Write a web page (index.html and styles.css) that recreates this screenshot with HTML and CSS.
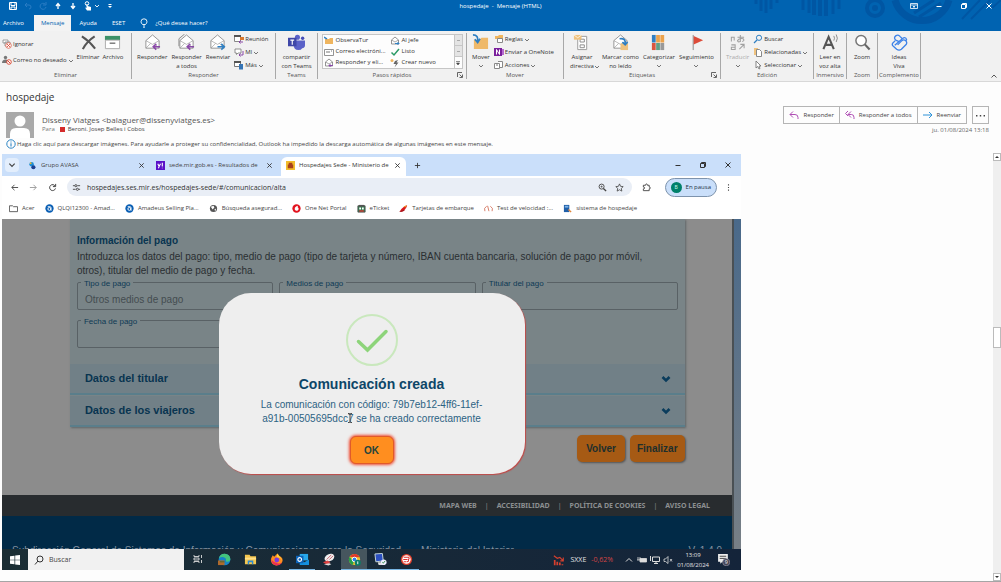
FILE: index.html
```html
<!DOCTYPE html>
<html lang="es">
<head>
<meta charset="utf-8">
<title>hospedaje - Mensaje (HTML)</title>
<link rel="stylesheet" href="styles.css">
</head>
<body>
<svg class="defs" aria-hidden="true">
  <symbol id="chev" viewBox="0 0 6 6"><path d="M1 2l2 2 2-2" fill="none" stroke="currentColor" stroke-width=".9"/></symbol>
  <symbol id="env" viewBox="0 0 18 18"><path d="M2 7l7-6 7 6v8H2z" fill="#fff" stroke="#888" stroke-width=".9"/><path d="M2 7l7 4 7-4M2 15l5-5M16 15l-5-5" fill="none" stroke="#999" stroke-width=".7"/></symbol>
  <symbol id="x" viewBox="0 0 8 8"><path d="M1.500 1.500l5 5m0-5l-5 5" fill="none" stroke="currentColor"/></symbol>
  <symbol id="restore" viewBox="0 0 8 8"><path d="M1.500 2.500h4v4h-4zM2.500 2V1.500h4v4H6" fill="none" stroke="currentColor"/></symbol>
  <symbol id="launch" viewBox="0 0 6 6"><path d="M.5 5V.5H5M2.500 2.500L5 5M5.500 2.500v3h-3" fill="none" stroke="#555" stroke-width=".9"/></symbol>
  <symbol id="amadeus" viewBox="0 0 10 10"><circle cx="5" cy="5" r="4.600" fill="#0a5fb4"/><circle cx="4.800" cy="5.500" r="1.600" fill="none" stroke="#fff"/><path d="M3 3h2.500q1.200 0 1.200 1.200V7.500" fill="none" stroke="#fff"/></symbol>
</svg>

<header class="titlebar">
  <svg class="art" viewBox="0 0 250 31" aria-hidden="true">
    <g stroke="#0056a3" stroke-width="3" fill="none"><path d="M5 0v4M10 0v11M15 0v13M20 0v9M26 0v3M52 0v10M58 0v13"/><path d="M63 0v15M69 0v16M75 0v16" stroke-width="4"/><path d="M82 0v14M88 0v9"/><circle cx="124" cy="8" r="8" stroke-width="4"/><path d="M144 0a28 28 0 0 0 54 0" stroke-width="7"/><path d="M163 13L183 0M168 17l22-14" /><path d="M211 19L229 0M220 19L239 0M241 8l9-8" stroke-width="2"/></g><circle cx="124" cy="8" r="3" fill="#0056a3"/>
  </svg>
  <div class="title-row">
    <div class="quick">
      <button aria-label="Guardar"><svg viewBox="0 0 10 10"><path d="M1.500 1.500h7v7h-7zM3 1.500v3h4v-3M3 8.500V6h4v2.500" fill="none" stroke="#fff"/></svg></button>
      <button aria-label="Deshacer"><svg viewBox="0 0 10 10"><path d="M4 2L2 4l2 2M2 4h4q2 0 2 2T6 8" fill="none" stroke="#2a7dc4"/></svg></button>
      <button aria-label="Rehacer"><svg viewBox="0 0 10 10"><path d="M7 3a3 3 0 1 0 1 3M8 1v3H5" fill="none" stroke="#2a7dc4"/></svg></button>
      <button aria-label="Anterior"><svg viewBox="0 0 10 10"><path d="M5 8V3M3 5l2-2.500L7 5" fill="none" stroke="#fff" stroke-width="1.300"/></svg></button>
      <button aria-label="Siguiente"><svg viewBox="0 0 10 10"><path d="M5 2v5M3 5l2 2.500L7 5" fill="none" stroke="#fff" stroke-width="1.300"/></svg></button>
      <button aria-label="Modo táctil"><svg viewBox="0 0 10 10"><circle cx="4" cy="2.500" r="1.800" fill="none" stroke="#fff"/><path d="M3.500 3v4L2 6.500 4 9.500h4V6L4.500 5V3z" fill="#fff"/></svg></button>
      <button class="mini" aria-label="Opciones"><svg viewBox="0 0 6 6"><use href="#chev"/></svg></button>
      <button class="mini last" aria-label="Personalizar"><svg viewBox="0 0 6 6"><path d="M1.500 1.500h3" stroke="#fff"/><path d="M1 3h4L3 5z" fill="#fff"/></svg></button>
    </div>
    <span>hospedaje&nbsp; -&nbsp; Mensaje (HTML)</span>
    <div class="win">
      <button aria-label="Cinta"><svg viewBox="0 0 8 8"><path d="M.5 1.500h7v5h-7zM.5 3h7M4 6V4M3 5l1-1 1 1" fill="none" stroke="#fff" stroke-width=".8"/></svg></button>
      <button aria-label="Minimizar"><svg viewBox="0 0 8 8"><path d="M1.500 4.500h5" stroke="#fff"/></svg></button>
      <button aria-label="Restaurar"><svg viewBox="0 0 8 8"><use href="#restore"/></svg></button>
      <button aria-label="Cerrar"><svg viewBox="0 0 8 8"><use href="#x"/></svg></button>
    </div>
  </div>
  <nav class="tabs">
    <button>Archivo</button><button class="on">Mensaje</button><button>Ayuda</button><button>ESET</button>
    <label class="tell"><svg viewBox="0 0 8 10"><path d="M2.500 6.500Q1 5 1 3.800a3 3 0 0 1 6 0Q7 5 5.500 6.500zM3 8h2M3.300 9.400h1.400" fill="none" stroke="#fff" stroke-width=".9"/></svg><input type="text" placeholder="¿Qué desea hacer?" aria-label="¿Qué desea hacer?"></label>
  </nav>
</header>

<section class="ribbon" aria-label="Cinta de opciones">
  <div class="group">
    <div class="tools tight">
      <div class="list two">
        <button><svg viewBox="0 0 10 10"><path d="M1 1h5v3H1zM3 3h5v4H3z" fill="#fff" stroke="#888" stroke-width=".8"/><circle cx="6.500" cy="6.500" r="2.800" fill="#fff" stroke="#dd6a58" stroke-width=".9"/><path d="M5.200 5.200l2.600 2.600M7.800 5.200L5.200 7.800" stroke="#d9442f"/></svg>Ignorar</button>
        <button><svg viewBox="0 0 10 10"><circle cx="3.500" cy="2.500" r="1.700" fill="#777"/><path d="M0 8q0-3.500 3.500-3.500T7 8z" fill="#777"/><circle cx="7" cy="7" r="2.300" fill="#fff" stroke="#d9442f" stroke-width=".9"/><path d="M5.500 5.500l3 3" stroke="#d9442f"/></svg>Correo no deseado<svg class="cv"><use href="#chev"/></svg></button>
      </div>
      <button class="big"><svg viewBox="0 0 18 18"><path d="M2 2.500q8 5 14 13M15.500 2.500Q7 8 3 16" fill="none" stroke="#555" stroke-width="2.200"/></svg>Eliminar</button>
      <button class="big"><svg viewBox="0 0 18 18"><path d="M1 2h16v4.500H1z" fill="#3c9168"/><path d="M1.500 6.500h15v9h-15z" fill="#fff" stroke="#aaa"/><path d="M6 9h6v1.500H6z" fill="#777"/></svg>Archivo</button>
    </div>
    <footer>Eliminar</footer>
  </div>
  <div class="group">
    <div class="tools wide">
      <button class="big"><svg viewBox="0 0 18 18"><use href="#env"/><path d="M17 13.500h-7m3-3l-3.200 3 3.200 3" fill="none" stroke="#8a4aa8" stroke-width="1.700"/></svg>Responder</button>
      <button class="big"><svg viewBox="0 0 18 18"><path d="M1 13V5l6-5" fill="none" stroke="#888"/><use href="#env"/><path d="M17 13.500h-7m3-3l-3.200 3 3.200 3" fill="none" stroke="#8a4aa8" stroke-width="1.700"/></svg>Responder<br>a todos</button>
      <button class="big"><svg viewBox="0 0 18 18"><use href="#env"/><path d="M9 13.500h7m-3-3l3.200 3-3.200 3" fill="none" stroke="#2f7fc2" stroke-width="1.700"/></svg>Reenviar</button>
      <div class="list">
        <button><svg viewBox="0 0 10 10"><path d="M.5 1.500h6v6h-6z" fill="#fff" stroke="#888"/><path d="M0 1h7v2H0z" fill="#555"/><path d="M6 3h4v3H6z" fill="#d9792f"/><path d="M9 8H5m1.500-1.500L5 8l1.500 1.500" stroke="#8a4aa8" fill="none"/></svg>Reunión</button>
        <button><svg viewBox="0 0 10 10"><path d="M1 2h6v4H4L2.500 7.500V6H1z" fill="#fff" stroke="#777" stroke-width=".8"/><path d="M9 4v4H5m1.500-1.500L5 8l1.500 1.500" stroke="#8a4aa8" fill="none"/></svg>MI<svg class="cv"><use href="#chev"/></svg></button>
        <button><svg viewBox="0 0 10 10"><path d="M.5 1.500h6v5h-6z" fill="#fff" stroke="#777"/><path d="M0 1h7v2H0z" fill="#555"/><path d="M5 4h4v5.500H5z" fill="#3574b5"/></svg>Más<svg class="cv"><use href="#chev"/></svg></button>
      </div>
    </div>
    <footer>Responder</footer>
  </div>
  <div class="group">
    <div class="tools mid">
      <button class="big"><svg viewBox="0 0 18 18"><circle cx="10" cy="3.500" r="2.700" fill="#5b62c8"/><circle cx="15.500" cy="4.500" r="1.800" fill="#464eb8"/><path d="M6 7h12v5q0 3-3 3-1 2-4 2-5 0-5-5z" fill="#5b62c8"/><path d="M0 4h9v9H0z" fill="#3f47a8"/><path d="M2.500 6.500h4M4.500 6.500v5" stroke="#fff" stroke-width="1.200"/></svg>compartir<br>con Teams</button>
    </div>
    <footer>Teams</footer>
  </div>
  <div class="group">
    <div class="tools mid">
      <div class="gallery">
        <button><svg viewBox="0 0 10 10"><path d="M1 3h4l1-1h3v6H1z" fill="#efb55f"/><path d="M0 1l3 2" stroke="#2f7fc2" stroke-width="1.500"/></svg>ObservaTur</button>
        <button><svg viewBox="0 0 10 10"><path d="M1.500 4L5 1l3.500 3v4h-7z" fill="#fff" stroke="#888" stroke-width=".9"/><path d="M1.500 4L5 6l3.500-2" fill="none" stroke="#888" stroke-width=".7"/><path d="M5 7.500h4M7.500 6L9 7.500 7.500 9" stroke="#2f7fc2" fill="none"/></svg>Al jefe</button>
        <button><svg viewBox="0 0 10 10"><path d="M.5 2.500h9v6h-9z" fill="#fff" stroke="#888" stroke-width=".9"/><path d="M2 5h4M7 4h1" stroke="#777"/></svg>Correo electróni...</button>
        <button><svg viewBox="0 0 10 10"><path d="M1.500 5.500L4 8l5-6" fill="none" stroke="#2b9a66" stroke-width="1.500"/></svg>Listo</button>
        <button><svg viewBox="0 0 10 10"><path d="M1.500 4L5 1l3.500 3v4h-7z" fill="#fff" stroke="#888" stroke-width=".9"/><path d="M1.500 4L5 6l3.500-2" fill="none" stroke="#888" stroke-width=".7"/><path d="M9 7.500H5M6.500 6L5 7.500 6.500 9" stroke="#8a4aa8" fill="none"/></svg>Responder y eli...</button>
        <button><svg viewBox="0 0 10 10"><path d="M5 3L3.500 6H6L4.500 9.500 8.500 4.500H6.500L8 2z" fill="#666"/><circle cx="2" cy="2.500" r="1.500" fill="#efb55f"/></svg>Crear nuevo</button>
        <div class="spin"><button aria-label="Subir"><i></i></button><button aria-label="Bajar"><i></i></button><button aria-label="Más pasos"><svg viewBox="0 0 6 6"><path d="M1 1.500h4M1.500 3h3L3 5z" stroke="#444" stroke-width=".6" fill="#444"/></svg></button></div>
      </div>
    </div>
    <footer>Pasos rápidos<svg class="launch"><use href="#launch"/></svg></footer>
  </div>
  <div class="group">
    <div class="tools wide">
      <button class="big"><svg viewBox="0 0 18 18"><path d="M2 6h6l2-2h7v12H2z" fill="#efb96a"/><path d="M1 1q6 0 5 7M3 5.500L6 9l2.500-4" fill="none" stroke="#2f7fc2" stroke-width="1.800"/></svg>Mover<svg class="cv"><use href="#chev"/></svg></button>
      <div class="list">
        <button><svg viewBox="0 0 10 10"><path d="M1 2h3l1-1h4v4H1z" fill="#efb55f"/><path d="M3.500 4.500h5v4h-5z" fill="#fff" stroke="#888"/></svg>Reglas<svg class="cv"><use href="#chev"/></svg></button>
        <button><svg viewBox="0 0 10 10"><path d="M0 1h8v8H0z" fill="#7a1f9c"/><path d="M8 2h2v6H8z" fill="#b56ad0"/><path d="M2.500 7.500v-5l3 5v-5" stroke="#fff" fill="none"/></svg>Enviar a OneNote</button>
        <button><svg viewBox="0 0 10 10"><path d="M.5 3.500h5v5h-5zM4 1.500h4.500v6H6" fill="#fff" stroke="#888"/><path d="M2 5h2" stroke="#777"/></svg>Acciones<svg class="cv"><use href="#chev"/></svg></button>
      </div>
    </div>
    <footer>Mover</footer>
  </div>
  <div class="group">
    <div class="tools wide mid">
      <button class="big assign"><svg viewBox="0 0 18 18"><path d="M5 2.500h9.500v14H5z" fill="#fff" stroke="#999"/><path d="M7.500 5.500h4.500v3H7.500zM7.500 11.500h4.500v3H7.500z" fill="none" stroke="#888"/><path d="M1 1h8v5H1z" fill="#efc27e"/><path d="M1 1l4 3 4-3" fill="none" stroke="#fff" stroke-width=".8"/></svg>Asignar<br>directiva<svg class="cv in"><use href="#chev"/></svg></button>
      <button class="big"><svg viewBox="0 0 18 18"><use href="#env"/><path d="M9 10h8v7H9z" fill="#efc27e"/><path d="M8 5q7-1 6 6M11 8.500l3 3 2.500-3" fill="none" stroke="#2f7fc2" stroke-width="1.800"/></svg>Marcar como<br>no leído</button>
      <button class="big"><svg viewBox="0 0 18 18"><path d="M2 1h4v8H2z" fill="#2f7fc2"/><path d="M6.500 1h4v8h-4zM11 1h4v8h-4z" fill="#eba24c"/><path d="M2 9.500h4V17H2z" fill="#d9553f"/><path d="M6.500 9.500h4V17h-4z" fill="#5f9f86"/><path d="M11 9.500h4V17h-4z" fill="#999"/></svg>Categorizar<svg class="cv"><use href="#chev"/></svg></button>
      <button class="big"><svg viewBox="0 0 18 18"><path d="M5.500 1v16" stroke="#888"/><path d="M6 2l10 4.500L6 11z" fill="#dd4b39"/></svg>Seguimiento<svg class="cv"><use href="#chev"/></svg></button>
    </div>
    <footer>Etiquetas<svg class="launch"><use href="#launch"/></svg></footer>
  </div>
  <div class="group">
    <div class="tools wide">
      <button class="big off"><svg viewBox="0 0 18 18"><path d="M2.500 3v5M2 3.500h4M5.500 3v4M9 3.500h7M12 1v7q-3 1-3-1 2-3 6-2 2 2-1 3M2.500 11.500h4v5h-4v-2.500h4M11 16l5-5M12 11h4v4" fill="none" stroke="#a0a0a0" stroke-width="1.100"/></svg>Traducir<svg class="cv"><use href="#chev"/></svg></button>
      <div class="list">
        <button><svg viewBox="0 0 10 10"><circle cx="6" cy="3.800" r="2.600" fill="none" stroke="#2f7fc2"/><path d="M4 6L1 9" stroke="#2f7fc2" stroke-width="1.300"/></svg>Buscar</button>
        <button><svg viewBox="0 0 10 10"><path d="M1 1h4v7H1z" fill="#efc27e"/><path d="M3.500 2.500h3l2 2v5h-5z" fill="#fff" stroke="#888"/></svg>Relacionadas<svg class="cv"><use href="#chev"/></svg></button>
        <button><svg viewBox="0 0 10 10"><path d="M3 1v7l1.700-1.500L6 9l1-.5L6 6h2z" fill="#fff" stroke="#777" stroke-width=".9"/></svg>Seleccionar<svg class="cv"><use href="#chev"/></svg></button>
      </div>
    </div>
    <footer>Edición</footer>
  </div>
  <div class="group">
    <div class="tools mid"><button class="big"><svg viewBox="0 0 18 18"><path d="M1.500 16L7 3l5.500 13M3.500 11.500h7" fill="none" stroke="#555" stroke-width="2.200"/><path d="M12.500 2q1.500 2.500 0 5M15 .5q2.500 4 0 8" fill="none" stroke="#888"/></svg>Leer en<br>voz alta</button></div>
    <footer>Inmersivo</footer>
  </div>
  <div class="group">
    <div class="tools mid"><button class="big"><svg viewBox="0 0 18 18"><circle cx="7.500" cy="7" r="5.500" fill="#fff" stroke="#777" stroke-width="1.600"/><path d="M11.500 11l5 5.500" stroke="#666" stroke-width="2.300"/></svg>Zoom</button></div>
    <footer>Zoom</footer>
  </div>
  <div class="group">
    <div class="tools mid"><button class="big"><svg viewBox="0 0 18 18"><g fill="none" stroke="#3c82e8" stroke-width="1.400" stroke-linejoin="round"><path d="M8.500 8L5 6.500Q2.500 4 5 2q2.500-2 4.500.5L12 5 4 12"/><path d="M4.500 7L2 9.500Q.5 11.500 2.500 13L6 16.200q2.500 1.600 5 0l5-5Q17.500 9 15.500 7q-2-1.500-4 0L7 11.500"/><path d="M12 5l1.500-1q2.500-.5 3 2l-1 1.500"/></g></svg>Ideas<br>Viva</button></div>
    <footer>Complemento</footer>
  </div>
  <div class="group last"><button class="fold" aria-label="Contraer la cinta"><svg viewBox="0 0 8 6"><path d="M1.500 4.500L4 2l2.500 2.500" fill="none" stroke="#555"/></svg></button></div>
</section>

<section class="message">
  <h1>hospedaje</h1>
  <div class="meta">
    <svg class="avatar" viewBox="0 0 28 26"><path d="M0 0h28v26H0z" fill="#a9a9a9"/><circle cx="14" cy="9" r="5.500" fill="#fff"/><path d="M4 26v-4q0-6 6-6h8q6 0 6 6v4z" fill="#fff"/></svg>
    <div class="who">
      <div class="from">Disseny Viatges &lt;balaguer@dissenyviatges.es&gt;</div>
      <div class="to"><span>Para</span><i></i><b>Beroni. Josep Belles i Cobos</b></div>
    </div>
    <div class="actions">
      <div class="acts">
        <div class="trio">
          <button><svg viewBox="0 0 10 10"><path d="M4 1.500l-3 3 3 3M1 4.500h5q3 0 3 3V9" fill="none" stroke="#b04fb5"/></svg>Responder</button>
          <button><svg viewBox="0 0 10 10"><path d="M3 1L.5 3.500 3 6M6 1.500l-3 3 3 3M3 4.500h3.500q2.500 0 2.500 3V9" fill="none" stroke="#b04fb5"/></svg>Responder a todos</button>
          <button><svg viewBox="0 0 10 10"><path d="M0 5h9M6 2l3 3-3 3" fill="none" stroke="#2e93d8"/></svg>Reenviar</button>
        </div>
        <button class="more" aria-label="Más acciones"><svg viewBox="0 0 10 10"><path d="M0 4.400h1.600V6H0zM4.200 4.400h1.600V6H4.200zM8.400 4.400H10V6H8.400z" fill="#444"/></svg></button>
      </div>
      <time>ju. 01/08/2024 13:18</time>
    </div>
  </div>
  <button class="info"><svg viewBox="0 0 10 10"><circle cx="5" cy="5" r="4.200" fill="none" stroke="#2f86c4"/><path d="M5 4.300v3.200M5 2.400v1" stroke="#2f86c4" stroke-width="1.100"/></svg>Haga clic aquí para descargar imágenes. Para ayudarle a proteger su confidencialidad, Outlook ha impedido la descarga automática de algunas imágenes en este mensaje.</button>
</section>

<main class="body">
  <article class="shot">
    <div class="btabs">
      <button class="drop" aria-label="Buscar pestañas"><svg viewBox="0 0 6 6"><use href="#chev"/></svg></button>
      <div class="btab"><svg viewBox="0 0 10 10"><circle cx="4" cy="3.500" r="2.500" fill="#1b8fd6"/><circle cx="6" cy="7" r="2.300" fill="#1d3f8f"/><circle cx="3" cy="2.500" r="1" fill="#f0b52c"/></svg><span>Grupo AVASA</span><svg class="x"><use href="#x"/></svg></div>
      <div class="btab sep"><svg viewBox="0 0 10 10"><path d="M0 0h10v10H0z" fill="#5a10c8"/><path d="M2 3l1.500 3L5 3M3.500 6L2.700 8M7 2v4M7 7.500V8" stroke="#fff" stroke-width="1.200" fill="none"/></svg><span>sede.mir.gob.es - Resultados de</span><svg class="x"><use href="#x"/></svg></div>
      <div class="btab on"><svg viewBox="0 0 10 10"><path d="M0 0h10v10H0z" fill="#f2bd2d"/><path d="M3 2h4v6H3zM2 4h1v4H2zM7 4h1v4H7z" fill="#a8421c"/></svg><span>Hospedajes Sede - Ministerio de</span><svg class="x"><use href="#x"/></svg></div>
      <button class="plus" aria-label="Nueva pestaña"><svg viewBox="0 0 8 8"><path d="M4 1v6M1 4h6" stroke="#333"/></svg></button>
      <div class="bwin"><button aria-label="Minimizar"><svg viewBox="0 0 8 8"><path d="M1.500 4.500h5" stroke="#333"/></svg></button><button aria-label="Restaurar"><svg viewBox="0 0 8 8"><use href="#restore"/></svg></button><button aria-label="Cerrar"><svg viewBox="0 0 8 8"><use href="#x"/></svg></button></div>
    </div>
    <div class="bar">
      <button aria-label="Atrás"><svg viewBox="0 0 10 10"><path d="M9 5H2M5 2L2 5l3 3" fill="none" stroke="#444"/></svg></button>
      <button aria-label="Adelante"><svg viewBox="0 0 10 10"><path d="M1 5h7M5 2l3 3-3 3" fill="none" stroke="#999"/></svg></button>
      <button aria-label="Recargar"><svg viewBox="0 0 10 10"><path d="M8 3.500A3.300 3.300 0 1 0 8.300 6M8.500 1v3h-3" fill="none" stroke="#444" stroke-width="1.100"/></svg></button>
      <div class="address">
        <svg viewBox="0 0 10 10"><path d="M1 3h2M6 3h3M1 7h3M7.500 7H9" stroke="#444"/><circle cx="4.300" cy="3" r="1.200" fill="none" stroke="#444"/><circle cx="6" cy="7" r="1.200" fill="none" stroke="#444"/></svg>
        <input type="text" aria-label="Dirección" value="hospedajes.ses.mir.es/hospedajes-sede/#/comunicacion/alta">
        <svg viewBox="0 0 10 10"><circle cx="4" cy="4" r="2.800" fill="none" stroke="#444"/><path d="M6 6l3 3" stroke="#444" stroke-width="1.500"/><path d="M2.800 4h2.400M4 2.800v2.400" stroke="#444" stroke-width=".7"/></svg>
        <svg viewBox="0 0 10 10"><path d="M5 1l1.200 2.700 2.900.3L7 6l.6 3L5 7.500 2.400 9 3 6 .9 4l2.900-.3z" fill="none" stroke="#444" stroke-width=".9"/></svg>
      </div>
      <button class="ext" aria-label="Extensiones"><svg viewBox="0 0 10 10"><path d="M1.500 2.500H4q0-1.500 1-1.500t1 1.500h2v2q1.300 0 1.300 1T8 6.500v2H1.500V6.500q1.500 0 1.500-1t-1.500-1z" fill="none" stroke="#444"/></svg></button>
      <button class="pause"><i>B</i>En pausa</button>
      <button aria-label="Menú"><svg viewBox="0 0 10 10"><path d="M4.400 1.500h1.200v1.200H4.400zM4.400 4.400h1.200v1.200H4.400zM4.400 7.300h1.200v1.200H4.400z" fill="#444"/></svg></button>
    </div>
    <nav class="marks">
      <a href="#"><svg viewBox="0 0 10 10"><path d="M.5 2h3.500l1 1h4.500v5.500h-9z" fill="none" stroke="#555"/></svg>Acer</a>
      <a href="#"><svg><use href="#amadeus"/></svg>QLQI12300 - Amad...</a>
      <a href="#"><svg><use href="#amadeus"/></svg>Amadeus Selling Pla...</a>
      <a href="#"><svg viewBox="0 0 10 10"><circle cx="5" cy="5" r="4" fill="#555"/><path d="M2 3l3-1 1 2-2 2zM6 6l2-1-1 3z" fill="#fff"/></svg>Búsqueda asegurad...</a>
      <a href="#"><svg viewBox="0 0 10 10"><circle cx="5" cy="5" r="4.600" fill="#e2121e"/><path d="M6.500 2Q3 3 3 5.500a2.200 2.200 0 1 0 3.300-2z" fill="#fff"/></svg>One Net Portal</a>
      <a href="#"><svg viewBox="0 0 10 10"><path d="M1 2h8v7H1z" fill="#2f7a4c" stroke="#555"/><path d="M2 1h6v2H2z" fill="#555"/><path d="M2.500 4h2v2h-2zM5.500 4h2v2h-2z" fill="#fff"/><path d="M2.500 7h5v1.500h-5z" fill="#d33"/></svg>eTicket</a>
      <a href="#"><svg viewBox="0 0 10 10"><path d="M1 8q3-5 8-6.500Q8 6 4 8z" fill="#d9161c"/><path d="M0 9q3-3 7-3-2 3-7 3z" fill="#a9161c"/><path d="M5 3l4-2-2 3z" fill="#f2a51d"/></svg>Tarjetas de embarque</a>
      <a href="#"><svg viewBox="0 0 10 10"><path d="M1 8a4.200 4.200 0 0 1 2-5.500M9 8a4.200 4.200 0 0 0-2-5.500M4 2l1.500 6" fill="none" stroke="#d8806a" stroke-width="1.100"/></svg>Test de velocidad :...</a>
      <a class="sys" href="#"><svg viewBox="0 0 10 10"><path d="M1 1h6v8H1z" fill="#1f5fa8"/><path d="M2 2h4v2H2z" fill="#7fb3e6"/><path d="M6 6l3 3" stroke="#e0873a" stroke-width="1.500"/></svg>sistema de hospedaje</a>
    </nav>
    <div class="page">
      <section class="panel">
        <div class="pay">
          <h2>Información del pago</h2>
          <p>Introduzca los datos del pago: tipo, medio de pago (tipo de tarjeta y número, IBAN cuenta bancaria, solución de pago por móvil, otros), titular del medio de pago y fecha.</p>
          <div class="fields">
            <div class="field"><label for="tipo">Tipo de pago</label><input id="tipo" type="text" value="Otros medios de pago"></div>
            <div class="field"><label for="medios">Medios de pago</label><input id="medios" type="text"></div>
            <div class="field"><label for="titular">Titular del pago</label><input id="titular" type="text"></div>
            <div class="field"><label for="fecha">Fecha de pago</label><input id="fecha" type="text"></div>
          </div>
        </div>
        <button class="acc">Datos del titular<svg viewBox="0 0 10 10"><path d="M1.500 3L5 6.500 8.500 3" fill="none" stroke="#0a3c5c" stroke-width="2.600"/></svg></button>
        <button class="acc">Datos de los viajeros<svg viewBox="0 0 10 10"><path d="M1.500 3L5 6.500 8.500 3" fill="none" stroke="#0a3c5c" stroke-width="2.600"/></svg></button>
      </section>
      <div class="cta"><button>Volver</button><button>Finalizar</button></div>
      <footer class="links"><a href="#">MAPA WEB</a><i>|</i><a href="#">ACCESIBILIDAD</a><i>|</i><a href="#">POLÍTICA DE COOKIES</a><i>|</i><a href="#">AVISO LEGAL</a></footer>
      <div class="org"><span>Subdirección General de Sistemas de Información y Comunicaciones para la Seguridad &nbsp; - &nbsp; Ministerio del Interior</span><span>V. 1.4.9</span></div>
      <div class="modal" role="dialog" aria-labelledby="done">
        <svg class="ok-ring" viewBox="0 0 52 52"><circle cx="26" cy="26" r="25" fill="none" stroke="#c9e8bd" stroke-width="2"/><path d="M12.500 27.500l9 8.500L40 17.500" fill="none" stroke="#8dd47a" stroke-width="3.500" stroke-linecap="round"/></svg>
        <h3 id="done">Comunicación creada</h3>
        <p>La comunicación con código: 79b7eb12-4ff6-11ef-<br>a91b-00505695dcc7 se ha creado correctamente</p>
        <button>OK</button>
        <svg class="caret" viewBox="0 0 6 10"><path d="M1 .5h1.500L3 1l.5-.5H5M3 1v8M1 9.500h1.500L3 9l.5.500H5" fill="none" stroke="#333" stroke-width=".9"/></svg>
      </div>
    </div>
    <div class="taskbar">
      <button class="start" aria-label="Inicio"><svg viewBox="0 0 10 10"><path d="M0 1.300L4.500.7v4H0zM5.200.6L10 0v4.700H5.200zM0 5.300h4.500v4L0 8.700zM5.200 5.300H10V10l-4.800-.6z" fill="#fff"/></svg></button>
      <label class="search"><svg viewBox="0 0 10 10"><circle cx="6" cy="4" r="3" fill="none" stroke="#333"/><path d="M4 6L1 9.500" stroke="#333"/></svg><input type="text" placeholder="Buscar" aria-label="Buscar"></label>
      <div class="apps">
        <button aria-label="Vista de tareas"><svg class="s" viewBox="0 0 10 10"><path d="M1 1v1.500h5V1M1 9V7.500h5V9M1 4h5v2H1zM8.500 1v3M8.500 6v3" fill="none" stroke="#ddd" stroke-width=".9"/></svg></button>
        <button aria-label="Edge"><svg viewBox="0 0 14 14"><circle cx="7" cy="7" r="6.300" fill="#1683c8"/><path d="M1 6a6.200 6.200 0 0 1 12.300.5q0 3-3.300 3-2 0-1.500-1.500Q9 5 6 4.500 3 4 1 6z" fill="#43c47d"/><path d="M0 8h7v5H0z" fill="#b06a2c"/><path d="M2 9h5v1H2z" fill="#463"/></svg></button>
        <button aria-label="Explorador"><svg viewBox="0 0 14 14"><path d="M1 2h5l1 1.500h6V12H1z" fill="#f4c64f"/><path d="M1 5h12v2H1z" fill="#ffe08a"/><path d="M4 8h6v4H8.500v-2h-3v2H4z" fill="#2d8ad0"/></svg></button>
        <button aria-label="Firefox"><svg viewBox="0 0 14 14"><path d="M7 13.500A6 6 0 0 1 1.500 5L3 2.500 4.500 4 8 .5l2 2.500q4 2 3.500 5.500T7 13.500z" fill="#ff8a1f"/><path d="M8 .5l2 3q3 2 3 5l-2-3-4-1z" fill="#ffd23c"/><path d="M1.300 6q0 7 5.700 7.500 4 0 6-3-4 1.500-6.500 0Q2 9 1.300 6z" fill="#ec2d53"/><circle cx="7.300" cy="7.500" r="2.600" fill="#7a3ae0"/></svg></button>
        <button class="open" aria-label="Outlook"><svg viewBox="0 0 14 14"><path d="M4 1h9v7H4z" fill="#28a8ea"/><path d="M4 7l5 3 5-3v6H4z" fill="#1490df"/><path d="M0 3h8v8H0z" fill="#0b62b8"/><circle cx="4" cy="7" r="2" fill="none" stroke="#fff" stroke-width="1.200"/></svg></button>
        <button aria-label="Utilidad"><svg viewBox="0 0 14 14"><ellipse cx="8" cy="5" rx="5.500" ry="3.800" transform="rotate(-25 8 5)" fill="#eee"/><path d="M5 7l5-5M8 7l4-4" stroke="#c9606c"/><path d="M1 10l5-2 3 2-3 3z" fill="#d44"/><path d="M2 12l6-1 2 1-3 1.500z" fill="#ddd"/></svg></button>
        <button class="open cur" aria-label="Chrome"><svg viewBox="0 0 14 14"><circle cx="7" cy="7" r="6" fill="#f7c52b"/><path d="M1.800 4A6 6 0 0 1 12.500 4.500H7z" fill="#e2372c"/><path d="M1.800 4L6 9.500 5.500 13A6 6 0 0 1 1.800 4z" fill="#24a04a"/><circle cx="7" cy="7" r="2.500" fill="#2f7fe8" stroke="#fff"/><circle cx="10.500" cy="10.500" r="3.300" fill="#0c7d66"/><path d="M10.500 9v3" stroke="#fff"/></svg></button>
        <button class="open" aria-label="Escritorio remoto"><svg viewBox="0 0 14 14"><path d="M1 1l8-.5 1 8-8 1z" fill="#2b4fc0" stroke="#cdd"/><path d="M4 10h7l1 3H5z" fill="#ddd"/><circle cx="10.500" cy="10" r="3" fill="#eef" /><path d="M9 10l1 1 2-2.500" fill="none" stroke="#2a8a3c"/></svg></button>
        <button class="open" aria-label="Avast"><svg viewBox="0 0 14 14"><circle cx="7" cy="7" r="6" fill="#e3402c"/><circle cx="7" cy="7" r="4.500" fill="#fff"/><path d="M4 4.500h5.500q1 1.500-.5 2.500 1 2-1.500 2.500M3.500 7H8M4 9.500h3" fill="none" stroke="#d33" stroke-width="1.100"/></svg></button>
      </div>
      <div class="tray">
        <span class="stock"><svg viewBox="0 0 14 14"><path d="M1 2l4 3 3-1 4 4M12 4v4H8.500" fill="none" stroke="#d5402f" stroke-width="1.300"/><path d="M1 7h2v6H1zM4 9h2v4H4zM7 10h2v3H7zM10 12h2v1h-2z" fill="#d5402f"/></svg>SXXE<em>-0,62%</em></span>
        <svg viewBox="0 0 10 10"><path d="M2 6.500l3-3 3 3" fill="none" stroke="#ddd"/></svg>
        <svg viewBox="0 0 10 10"><path d="M3 3.500h6.500v3.500H3zM1 2v3M3 2v3M0 5h4" fill="#ddd" stroke="#ddd" stroke-width=".8"/></svg>
        <svg viewBox="0 0 10 10"><path d="M2.500 2h7v4.500h-7zM6 6.500v2M4 8.500h4M.5 1v5" fill="none" stroke="#ddd"/></svg>
        <svg viewBox="0 0 10 10"><path d="M1 4v2.500h1.500L5 8.500v-7L2.500 4zM7 4l2 2.500M9 4L7 6.500" fill="none" stroke="#ddd" stroke-width=".8"/></svg>
        <time>13:09<br>01/08/2024</time>
        <svg class="note" viewBox="0 0 12 12"><path d="M1 1h9v7H5l-2 2V8H1z" fill="#eee"/><path d="M2.500 3h6M2.500 5h6" stroke="#333" stroke-width=".8"/><circle cx="8.500" cy="8.500" r="3.300" fill="#445" stroke="#99a" stroke-width=".6"/><text x="8.500" y="10.300" text-anchor="middle">9</text></svg>
      </div>
    </div>
  </article>
  <div class="scroll" aria-hidden="true"><i class="up"></i><i class="thumb"></i><i class="down"></i></div>
</main>
</body>
</html>
```
FILE: styles.css
```css
* { box-sizing: border-box; }
body { margin: 0; min-height: 100vh; display: flex; flex-direction: column; background: #fdfdfd; color: #444; font: 6px/9px "Open Sans", "Noto Sans", sans-serif; border-bottom: 1px solid #a5a5a5; overflow: hidden; }
button, input { font: inherit; color: inherit; background: none; border: 0; padding: 0; margin: 0; min-width: 0; outline: 0; }
a { color: inherit; text-decoration: none; }
svg { display: block; flex: none; width: 10px; height: 10px; }
i, em { font-style: normal; }
.defs { position: absolute; width: 0; height: 0; }

/* Title bar */
.titlebar { position: relative; background: #0063b1; color: #fff; }
.art { position: absolute; right: 0; top: 0; width: 250px; height: 31px; }
.title-row { position: relative; display: grid; grid-template-columns: 1fr auto 1fr; align-items: center; height: 12px; }
.quick { display: flex; align-items: center; gap: 5px; padding-left: 8px; }
.quick .mini { margin-left: -4px; }
.quick .last { margin-left: 2px; }
.mini svg { width: 6px; height: 6px; }
.win { display: flex; justify-content: flex-end; gap: 17px; padding-right: 8px; }
.win svg, .bwin svg { width: 8px; height: 8px; }
.tabs { position: relative; display: flex; align-items: stretch; height: 19px; padding: 3px 0 0 0; }
.tabs button { padding: 0 3px; margin-right: 7px; }
.tabs button + button { padding: 0 7px; margin-right: 1px; }
.tabs .on { background: #f3f3f3; color: #0063b1; }
.tell { display: flex; align-items: center; gap: 7px; margin-left: 7px; }
.tell svg { width: 8px; }
.tell input::placeholder { color: #fff; opacity: 1; }

/* Ribbon */
.ribbon { display: grid; grid-template-columns: 132fr 144fr 42fr 149fr 97fr 157fr 93fr 33fr 31fr 43fr 80fr; background: #f1f1f1; border-bottom: 1px solid #d8d8d8; padding-top: 2px; color: #333; height: 51px; }
.group { display: flex; flex-direction: column; border-right: 1px solid #a8a8a8; margin-bottom: 2px; min-width: 0; white-space: nowrap; }
.group.last { border: 0; justify-content: flex-end; align-items: flex-end; }
.fold { padding-right: 3px; }
.fold svg { width: 8px; height: 6px; }
.tools { flex: 1; min-height: 0; display: flex; gap: 3px; }
.tight { padding: 0 2px; }
.wide { padding: 0 5px; gap: 4px; }
.mid { justify-content: center; }
.group footer { position: relative; text-align: center; line-height: 7px; color: #555; }
.launch { position: absolute; right: 3px; top: 0; width: 6px; height: 6px; }
.big { display: flex; flex-direction: column; align-items: center; align-self: flex-start; line-height: 9px; position: relative; padding-top: 1px; }
.big svg { width: 17px; height: 17px; margin-bottom: 2px; }
.big .cv, .cv { width: 6px; height: 6px; margin: 1px 0 0; color: #666; }
.big .cv.in { position: absolute; right: -6px; bottom: 1px; }
.assign { margin-right: 4px; }
.list { display: flex; flex-direction: column; gap: 3px; padding-top: 1px; }
.list.two { gap: 6px; padding-top: 6px; }
.list button { display: flex; align-items: center; gap: 1px; }
.off { color: #aaa; }
.gallery { display: grid; grid-template-columns: 66px 65px 8px; grid-template-rows: repeat(3, 11px); border: 1px solid #c6c6c6; background: #fdfdfd; margin-top: 1px; height: 35px; }
.gallery > button { display: flex; align-items: center; gap: 1px; }
.gallery > button svg { margin: 0 1px; }
.spin { grid-area: 1 / 3 / 4 / 4; display: grid; grid-template-rows: 1fr 1fr 1fr; border-left: 1px solid #c6c6c6; }
.spin button { display: grid; place-items: center; background: #e4e4e4; border-bottom: 1px solid #c6c6c6; }
.spin button:last-child { background: #fdfdfd; border: 0; }
.spin i { width: 3px; height: 1px; background: #aaa; }
.spin svg { width: 6px; height: 6px; }

/* Message header */
.message { padding: 8px 12px 0 6px; }
h1 { margin: 0; font: 10px/15px "Open Sans", sans-serif; color: #333; }
.meta { display: flex; gap: 8px; }
.avatar { width: 28px; height: 26px; margin-top: 7px; }
.who { flex: 1; padding-top: 9px; }
.from { font-size: 8px; line-height: 11px; color: #555; }
.to { display: flex; align-items: center; gap: 5px; }
.to span { color: #777; }
.to b { font-weight: 500; }
.to i { width: 5px; height: 5px; background: #d42b2b; margin-right: -2px; }
.actions { padding-top: 1px; text-align: right; }
.acts { display: flex; gap: 5px; height: 18px; margin-bottom: 2px; }
.trio { display: flex; border: 1px solid #b5b5b5; }
.trio button { display: flex; align-items: center; gap: 4px; padding: 0 5px; font-weight: 500; }
.trio button + button { border-left: 1px solid #b5b5b5; }
.more { border: 1px solid #b5b5b5; width: 17px; display: grid; place-items: center; }
.more svg { width: 9px; height: 9px; }
.actions time { color: #666; }
.info { display: flex; align-items: center; gap: 1px; height: 10px; margin-top: 1px; font-weight: 500; }

/* Message body */
.body { flex: 1; display: grid; grid-template-columns: 739fr 252fr 8px; padding: 5px 0 0 2px; }
.scroll { grid-column: 3; display: flex; flex-direction: column; background: #efefef; justify-content: space-between; margin-top: -1px; }
.scroll i { height: 8px; border: 1px solid #bbb; background: #fff; display: grid; place-items: center; }
.scroll .thumb { height: 21px; margin-bottom: 60px; }
.up::before, .down::before { content: ""; border: 2px solid transparent; border-bottom-color: #333; border-top: 0; }
.down::before { border-top: 2px solid #333; border-bottom: 0; }
.shot { display: flex; flex-direction: column; align-self: start; min-width: 0; color: #444; white-space: nowrap; }
.btabs { display: flex; height: 22px; background: #cadffa; padding-top: 3px; }
.drop { width: 14px; height: 14px; margin: 1px 9px 0 3px; border-radius: 4px; background: #e3eefc; display: grid; place-items: center; }
.drop svg { width: 8px; height: 8px; }
.btab { display: flex; align-items: center; width: 128px; gap: 4px; padding: 0 11px 3px 0; }
.btab svg:first-child { width: 9px; height: 9px; }
.btab span { flex: 1; overflow: hidden; }
.btab .x { width: 7px; height: 7px; color: #333; }
.btab.on { width: 125px; background: #fff; border-radius: 6px 6px 0 0; padding: 0 5px 3px; margin-left: -3px; color: #333; }
.plus { margin: 0 0 3px 8px; }
.plus svg { width: 7px; height: 7px; }
.bwin { margin-left: auto; display: flex; align-items: center; gap: 17px; padding: 0 9px 3px 0; color: #333; }
.bar { display: flex; align-items: center; gap: 10px; height: 22px; padding: 0 8px; background: #fff; }
.bar > button svg { width: 9px; height: 9px; }
.address { flex: 1; display: flex; align-items: center; gap: 8px; height: 18px; padding: 0 8px 0 5px; border-radius: 9px; background: #e9eef6; font-size: 7px; min-width: 0; }
.address svg { width: 9px; height: 9px; }
.address input { flex: 1; height: 12px; margin-left: -2px; color: #333; }
.pause { display: flex; align-items: center; gap: 4px; height: 19px; padding: 0 5px; margin-left: 4px; margin-right: -3px; border: 1px solid #7d93ad; border-radius: 10px; background: #cadffa; color: #234; font-weight: 500; }
.pause i { width: 11px; height: 11px; border-radius: 50%; background: #00806a; color: #cfe; line-height: 11px; font-size: 5px; }
.marks { display: flex; align-items: center; gap: 10px; height: 21px; padding: 0 7px; background: #fff; }
.marks a { display: flex; align-items: center; gap: 4px; }
.marks svg { width: 9px; height: 9px; }

/* Ministry page */
.page { position: relative; display: flex; flex-direction: column; height: 330px; padding-right: 9px; overflow: hidden; background: linear-gradient(90deg, #8c8c8c 0 98.800%, #4a5054 98.800%, #4a5054 99%, transparent 99%), linear-gradient(#49698a, #777f86); font-family: "Liberation Sans", Arial, sans-serif; font-size: 10px; color: #2a2f32; white-space: normal; }
.panel { margin: 0 6.400% 0 9.300%; background: #798487; box-shadow: 1px 1px 2px #5e6668; }
.pay { padding: 15px 7px; }
.page h2 { margin: 0 0 3px; font-size: 10px; line-height: 13px; color: #083450; }
.page p { margin: 0; line-height: 14px; }
.pay p { padding-right: 16px; }
.fields { display: grid; grid-template-columns: repeat(3, 1fr); gap: 10px 6px; padding-top: 4px; }
.field { position: relative; display: flex; }
.field label { position: absolute; left: 4px; top: -2px; padding: 0 3px; background: #798487; font-size: 8px; line-height: 8px; color: #0e3a55; }
.field input { flex: 1; height: 28px; border: 1px solid #596165; border-radius: 2px; padding: 6px 7px 0; color: #444c50; }
.acc { display: flex; align-items: center; justify-content: space-between; width: 100%; height: 31px; margin-top: 1px; padding: 0 14px 0 15px; background: #718087; border-bottom: 2px solid #5a7e8b; color: #083450; font-weight: 700; font-size: 11px; }
.cta { display: flex; justify-content: flex-end; gap: 5px; margin: 8px 6.500% 0 0; }
.cta button { height: 27px; padding: 0 9px; border-radius: 5px; background: #a65a14; box-shadow: 1px 1px 2px #555; color: #1e2f2c; font-weight: 700; font-size: 10px; }
.cta button + button { padding: 0 7px; }
.links { display: flex; justify-content: flex-end; align-items: center; gap: 7px; height: 21px; margin-top: auto; padding-right: 22px; background: #282c2f; color: #8c8f91; font: 700 7px "Noto Sans", "Open Sans", sans-serif; }
.links i { font-weight: 400; margin: 0 1px; }
.org { display: flex; justify-content: space-between; height: 33px; padding: 29px 10px 0; background: #012a47; color: #8793a0; font-size: 10px; line-height: 12px; overflow: hidden; white-space: nowrap; }
.modal { position: absolute; left: calc(50% - 153px); top: 74px; width: 306px; padding: 21px 20px 10px; border-radius: 32px; background: #eee; box-shadow: 1px 1px 1px #c04a48; display: flex; flex-direction: column; align-items: center; text-align: center; color: #2c6283; }
.ok-ring { width: 52px; height: 52px; }
.modal h3 { margin: 9px 0 5px; font-size: 14px; line-height: 18px; color: #0d4668; }
.modal button { width: 44px; height: 28px; margin-top: 10px; border-radius: 6px; background: #ff8e1f; border: 1px solid #e05a2b; box-shadow: 0 0 3px 1px #ee4b32; color: #24443c; font-weight: 700; }
.caret { position: absolute; left: 128px; top: 120px; width: 6px; height: 10px; }

/* Task bar */
.taskbar { display: flex; align-items: center; height: 21px; background: linear-gradient(90deg, #1b2e35, #14243a); color: #e4e4e4; }
.start { width: 26px; display: grid; place-items: center; }
.search { display: flex; align-items: center; gap: 5px; flex: 0 1 156px; align-self: stretch; padding-left: 6px; background: #f1f1f1; color: #333; font-size: 7px; }
.search input::placeholder { color: #444; opacity: 1; }
.apps { display: flex; align-self: stretch; padding-left: 1px; }
.apps button { width: 26px; display: grid; place-items: center; border-bottom: 1px solid transparent; }
.apps svg { width: 13px; height: 13px; }
.apps .s { width: 10px; height: 10px; }
.apps .open { border-bottom-color: #78b6e4; }
.apps .cur { background: #46565e; }
.tray { display: flex; align-items: center; gap: 3px; margin-left: auto; padding-right: 11px; }
.tray .stock { display: flex; align-items: center; gap: 5px; margin-right: 8px; font-size: 7px; }
.stock svg { width: 12px; height: 12px; }
.stock em { color: #d24545; }
.tray time { text-align: center; line-height: 10px; margin: 0 5px 0 1px; }
.note { width: 13px; height: 13px; }
.note text { font: 5px "Open Sans", sans-serif; fill: #fff; }
```
